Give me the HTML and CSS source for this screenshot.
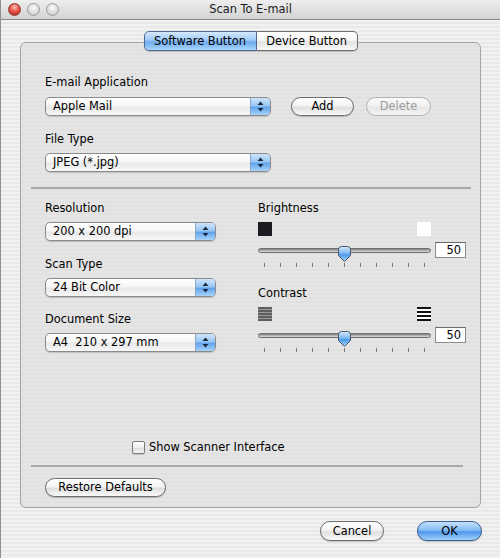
FILE: index.html
```html
<!DOCTYPE html>
<html>
<head>
<meta charset="utf-8">
<title>Scan To E-mail</title>
<link rel="stylesheet" href="styles.css">
</head>
<body>
<div class="window">
  <div class="titlebar">
    <div class="lights"><span class="light red"></span><span class="light"></span><span class="light"></span></div>
    <div class="title">Scan To E-mail</div>
    <div></div>
  </div>
  <div class="content">
    <div class="tabs">
      <div class="tab sel">Software Button</div>
      <div class="tab other">Device Button</div>
    </div>
    <div class="group">
      <div class="top">
        <div class="label">E-mail Application</div>
        <div class="r1">
          <div class="popup wide"><span class="ptext">Apple Mail</span><span class="parrow"><svg width="7" height="11" viewBox="0 0 7 11"><path d="M3.5 0.5 L6.5 4 H0.5 Z M3.5 10.5 L6.5 7 H0.5 Z" fill="#1a2a40"/></svg></span></div>
          <div class="btn add">Add</div>
          <div class="btn del disabled">Delete</div>
        </div>
        <div class="label l2">File Type</div>
        <div class="popup wide p2"><span class="ptext">JPEG (*.jpg)</span><span class="parrow"><svg width="7" height="11" viewBox="0 0 7 11"><path d="M3.5 0.5 L6.5 4 H0.5 Z M3.5 10.5 L6.5 7 H0.5 Z" fill="#1a2a40"/></svg></span></div>
      </div>
      <div class="sep"></div>
      <div class="cols">
        <div class="left">
          <div class="label">Resolution</div>
          <div class="popup narrow pm"><span class="ptext">200 x 200 dpi</span><span class="parrow"><svg width="7" height="11" viewBox="0 0 7 11"><path d="M3.5 0.5 L6.5 4 H0.5 Z M3.5 10.5 L6.5 7 H0.5 Z" fill="#1a2a40"/></svg></span></div>
          <div class="label lm16">Scan Type</div>
          <div class="popup narrow pm"><span class="ptext">24 Bit Color</span><span class="parrow"><svg width="7" height="11" viewBox="0 0 7 11"><path d="M3.5 0.5 L6.5 4 H0.5 Z M3.5 10.5 L6.5 7 H0.5 Z" fill="#1a2a40"/></svg></span></div>
          <div class="label lm15">Document Size</div>
          <div class="popup narrow pm"><span class="ptext">A4&nbsp; 210 x 297 mm</span><span class="parrow"><svg width="7" height="11" viewBox="0 0 7 11"><path d="M3.5 0.5 L6.5 4 H0.5 Z M3.5 10.5 L6.5 7 H0.5 Z" fill="#1a2a40"/></svg></span></div>
        </div>
        <div class="right">
          <div class="label">Brightness</div>
          <div class="icons">
            <span class="sq black"></span>
            <span class="sq white"></span>
          </div>
          <div class="srow">
            <div class="track">
              <svg class="thumb" width="15" height="18" viewBox="0 0 15 18"><defs><linearGradient id="tg1" x1="0" y1="0" x2="0" y2="1"><stop offset="0" stop-color="#d6eafc"/><stop offset="0.45" stop-color="#7cb6f0"/><stop offset="0.55" stop-color="#4d98e8"/><stop offset="1" stop-color="#a6dafc"/></linearGradient></defs><path d="M1.5 4.5 Q1.5 1.5 4.5 1.5 H10.5 Q13.5 1.5 13.5 4.5 V10.5 L7.5 16.5 L1.5 10.5 Z" fill="url(#tg1)" stroke="#4a5668" stroke-width="1"/></svg>
            </div>
            <div class="val">50</div>
          </div>
          <div class="ticks"><i></i><i></i><i></i><i></i><i></i><i></i><i></i><i></i><i></i><i></i><i></i></div>
          <div class="label lm19">Contrast</div>
          <div class="icons">
            <svg width="14" height="14" viewBox="0 0 14 14"><rect x="0" y="0" width="14" height="14" fill="#9a9a9a"/><rect x="0" y="0" width="14" height="2" fill="#5e5e5e"/><rect x="0" y="3" width="14" height="2" fill="#5e5e5e"/><rect x="0" y="6" width="14" height="2" fill="#5e5e5e"/><rect x="0" y="9" width="14" height="2" fill="#5e5e5e"/><rect x="0" y="12" width="14" height="2" fill="#5e5e5e"/></svg>
            <svg width="14" height="14" viewBox="0 0 14 14"><rect x="0" y="0" width="14" height="14" fill="#ffffff"/><rect x="0" y="0" width="14" height="2" fill="#111"/><rect x="0" y="4" width="14" height="2" fill="#111"/><rect x="0" y="8" width="14" height="2" fill="#111"/><rect x="0" y="12" width="14" height="2" fill="#111"/></svg>
          </div>
          <div class="srow">
            <div class="track">
              <svg class="thumb" width="15" height="18" viewBox="0 0 15 18"><defs><linearGradient id="tg2" x1="0" y1="0" x2="0" y2="1"><stop offset="0" stop-color="#d6eafc"/><stop offset="0.45" stop-color="#7cb6f0"/><stop offset="0.55" stop-color="#4d98e8"/><stop offset="1" stop-color="#a6dafc"/></linearGradient></defs><path d="M1.5 4.5 Q1.5 1.5 4.5 1.5 H10.5 Q13.5 1.5 13.5 4.5 V10.5 L7.5 16.5 L1.5 10.5 Z" fill="url(#tg2)" stroke="#4a5668" stroke-width="1"/></svg>
            </div>
            <div class="val">50</div>
          </div>
          <div class="ticks"><i></i><i></i><i></i><i></i><i></i><i></i><i></i><i></i><i></i><i></i><i></i></div>
        </div>
      </div>
      <div class="check"><span class="cbox"></span><span class="ctext">Show Scanner Interface</span></div>
      <div class="sep sep2"></div>
      <div class="btn restore">Restore Defaults</div>
    </div>
    <div class="footer">
      <div class="btn cancel">Cancel</div>
      <div class="btn ok">OK</div>
    </div>
  </div>
</div>
</body>
</html>
```

FILE: styles.css
```css
html, body {
  margin: 0;
  padding: 0;
}
body {
  width: 500px;
  height: 558px;
  overflow: hidden;
  font-family: "DejaVu Sans", "Liberation Sans", sans-serif;
  font-size: 11.4px;
  color: #000;
}
.window {
  height: 558px;
  box-sizing: border-box;
  border-left: 1px solid #8f8f8f;
  background: repeating-linear-gradient(to bottom, #f1f1f1 0, #f1f1f1 2px, #e9e9e9 2px, #e9e9e9 4px);
}
.titlebar {
  height: 19px;
  border-bottom: 1px solid #8a8a8a;
  background: linear-gradient(#eeeeee, #d3d3d3);
  display: grid;
  grid-template-columns: 1fr auto 1fr;
  align-items: center;
}
.lights {
  display: flex;
  gap: 6px;
  padding-left: 7px;
}
.light {
  width: 13px;
  height: 13px;
  box-sizing: border-box;
  border-radius: 50%;
  border: 1px solid #9a9a9a;
  background: radial-gradient(circle at 50% 35%, #fbfbfb 0, #dcdcdc 55%, #bdbdbd 100%);
}
.light.red {
  border-color: #8e3b34;
  background: radial-gradient(circle at 50% 30%, #ffc2b8 0, #e9564a 45%, #b01d14 100%);
}
.title {
  color: #1a1a1a;
  line-height: 19px;
}
.content {
  padding: 11px 19px 0 19px;
}
.tabs {
  display: flex;
  justify-content: center;
  height: 20px;
  margin-bottom: -9px;
  position: relative;
  z-index: 1;
}
.tab {
  box-sizing: border-box;
  height: 20px;
  line-height: 18px;
  text-align: center;
  border: 1px solid #6c6c6c;
  box-shadow: 0 1px 1px rgba(0,0,0,0.18);
}
.tab.sel {
  width: 113px;
  border-radius: 5px 0 0 5px;
  border-color: #4f6d94;
  background: linear-gradient(#d5e8fc, #9ecbf6 45%, #6eaaed 55%, #a9d5fb);
}
.tab.other {
  width: 101px;
  border-left: none;
  border-radius: 0 5px 5px 0;
  background: linear-gradient(#ffffff, #f5f5f5 45%, #e3e3e3 55%, #f9f9f9);
}
.group {
  box-sizing: border-box;
  height: 466px;
  border: 1px solid #a4a4a4;
  border-radius: 6px;
  padding-top: 32px;
  background: repeating-linear-gradient(to bottom, #e5e5e5 0, #e5e5e5 2px, #e1e1e1 2px, #e1e1e1 4px);
}
.top {
  padding-left: 24px;
}
.label {
  height: 14px;
  line-height: 14px;
  white-space: nowrap;
}
.l2 { margin-top: 16px; }
.lm16 { margin-top: 16px; }
.lm15 { margin-top: 15px; }
.lm19 { margin-top: 19px; }
.r1 {
  display: flex;
  margin-top: 8px;
}
.popup {
  display: flex;
  box-sizing: border-box;
  height: 19px;
  border: 1px solid #8a8a8a;
  border-radius: 5px;
  overflow: hidden;
  background: linear-gradient(#ffffff, #f6f6f6 45%, #e8e8e8 55%, #f7f7f7);
  box-shadow: 0 1px 1px rgba(0,0,0,0.15);
}
.wide { width: 226px; }
.narrow { width: 171px; }
.p2 { margin-top: 7px; }
.pm { margin-top: 7px; }
.ptext {
  flex: 1;
  padding-left: 7px;
  line-height: 17px;
  white-space: nowrap;
}
.parrow {
  width: 19px;
  border-left: 1px solid #8aa6c9;
  display: flex;
  align-items: center;
  justify-content: center;
  background: linear-gradient(#cfe5fb, #98c7f5 45%, #62a4ec 55%, #a7d4fb);
}
.btn {
  box-sizing: border-box;
  height: 19px;
  line-height: 17px;
  text-align: center;
  border: 1px solid #6d6d6d;
  border-radius: 10px;
  background: linear-gradient(#ffffff, #f4f4f4 45%, #dfdfdf 55%, #f9f9f9);
  box-shadow: 0 1px 1px rgba(0,0,0,0.2);
  white-space: nowrap;
}
.add { margin-left: 20px; width: 63px; }
.del { margin-left: 12px; width: 65px; }
.btn.disabled {
  color: #9d9d9d;
  border-color: #b3b3b3;
  box-shadow: none;
  background: linear-gradient(#fbfbfb, #f1f1f1 45%, #e6e6e6 55%, #f4f4f4);
}
.sep {
  margin: 15px 9px 0 10px;
  height: 2px;
  background: #aaaaaa;
}
.cols {
  display: flex;
  margin-top: 12px;
  padding-left: 24px;
}
.left { width: 171px; }
.right {
  margin-left: 42px;
  width: 208px;
}
.icons {
  margin-top: 7px;
  width: 173px;
  height: 14px;
  display: flex;
  justify-content: space-between;
}
.sq {
  width: 14px;
  height: 14px;
  display: block;
}
.sq.black { background: #1b1b22; }
.sq.white { background: #ffffff; }
.srow {
  margin-top: 6px;
  height: 16px;
  display: flex;
  align-items: center;
}
.track {
  position: relative;
  width: 173px;
  height: 5px;
  box-sizing: border-box;
  border: 1px solid #6f6f6f;
  border-radius: 3px;
  background: linear-gradient(#7a7a7a, #b9b9b9 60%, #dcdcdc);
}
.thumb {
  position: absolute;
  left: 78px;
  top: -4px;
}
.val {
  margin-left: 4px;
  width: 31px;
  height: 16px;
  box-sizing: border-box;
  border: 1px solid #8d8d8d;
  border-top-color: #6a6a6a;
  background: #ffffff;
  text-align: right;
  padding-right: 4px;
  line-height: 14px;
}
.ticks {
  margin-top: 5px;
  width: 173px;
  height: 4px;
  box-sizing: border-box;
  padding: 0 6px;
  display: flex;
  justify-content: space-between;
}
.ticks i {
  display: block;
  width: 1px;
  height: 4px;
  background: #7a7a7a;
}
.check {
  margin-top: 88px;
  height: 14px;
  display: flex;
  align-items: center;
  padding-left: 111px;
}
.cbox {
  width: 13px;
  height: 13px;
  box-sizing: border-box;
  border: 1px solid #7a7a7a;
  border-radius: 2px;
  background: linear-gradient(#ffffff, #eeeeee 50%, #dedede 55%, #f6f6f6);
  box-shadow: 0 1px 1px rgba(0,0,0,0.15);
}
.ctext {
  margin-left: 4px;
  line-height: 14px;
}
.sep2 {
  margin: 11px 17px 0 10px;
}
.restore {
  margin: 11px 0 0 24px;
  width: 121px;
}
.footer {
  display: flex;
  justify-content: flex-end;
  gap: 33px;
  margin-top: 13px;
  margin-right: -1px;
}
.cancel, .ok {
  height: 20px;
  line-height: 18px;
}
.cancel { width: 64px; }
.ok {
  width: 65px;
  border-color: #3a5e92;
  background: linear-gradient(#c6e1fc, #84bcf4 45%, #4f98ea 55%, #9fd2fd);
}
```
